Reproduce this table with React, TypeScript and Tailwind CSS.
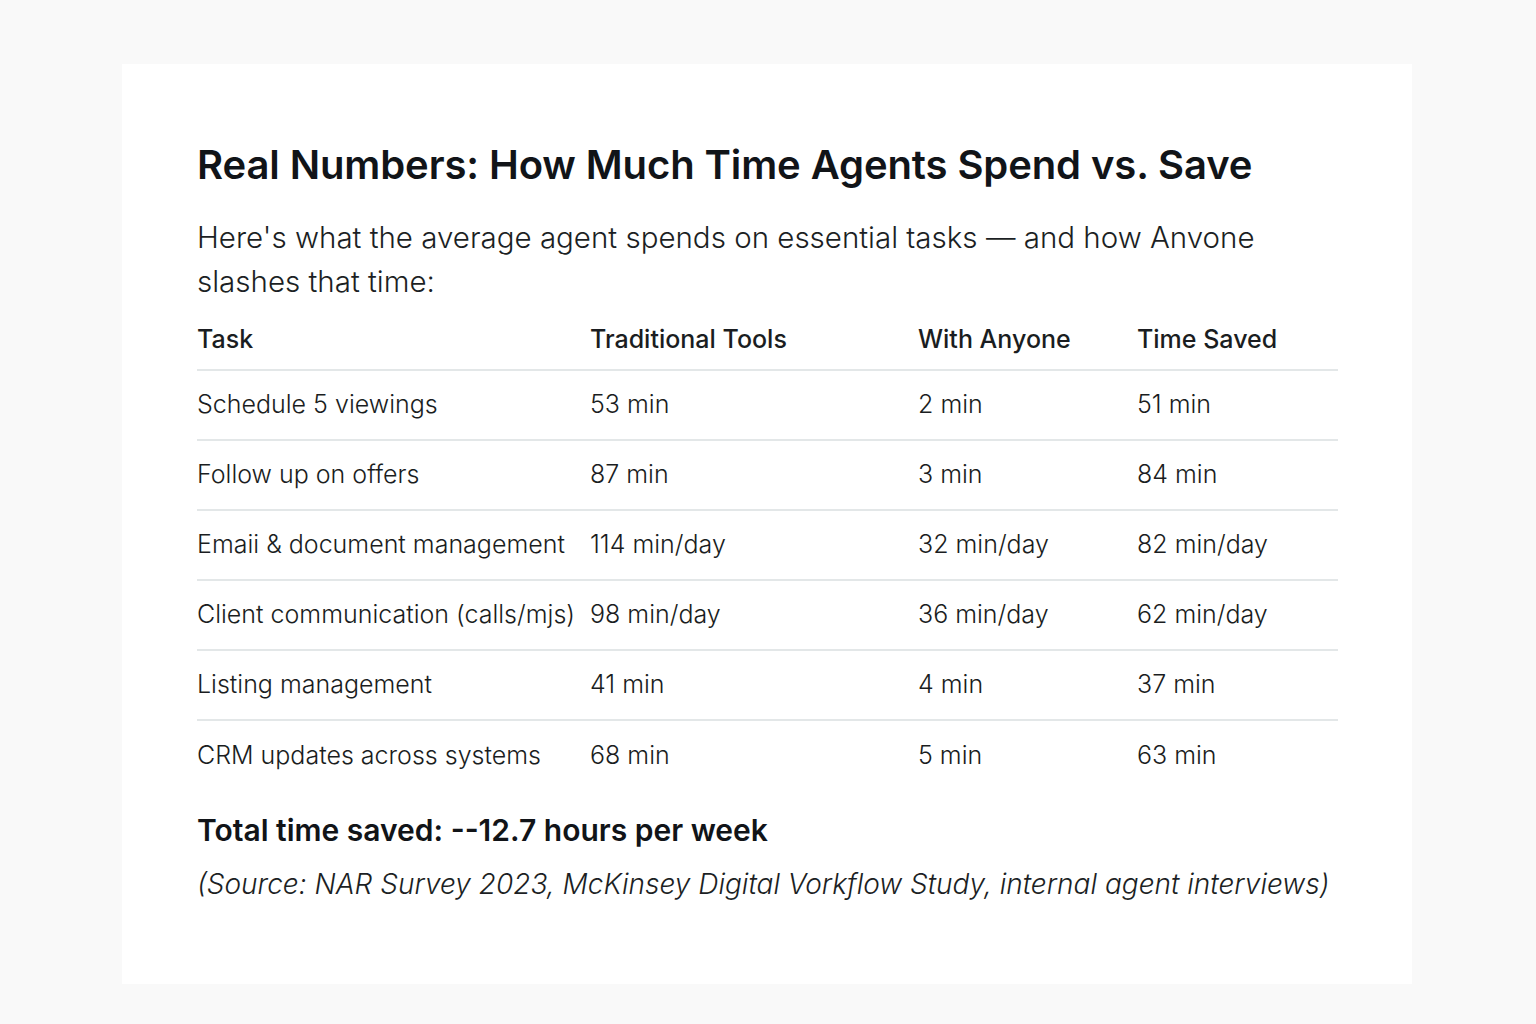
const rows = [
  ["Schedule 5 viewings", "53 min", "2 min", "51 min"],
  ["Follow up on offers", "87 min", "3 min", "84 min"],
  ["Emaii & document management", "114 min/day", "32 min/day", "82 min/day"],
  ["Client communication (calls/mjs)", "98 min/day", "36 min/day", "62 min/day"],
  ["Listing management", "41 min", "4 min", "37 min"],
  ["CRM updates across systems", "68 min", "5 min", "63 min"],
];

const App = () => {
  return (
    <div
      className="min-h-screen w-full bg-[#f9f9f9] pt-[64px] pl-[122px]"
      style={{ fontFamily: "Inter, 'Noto Sans', sans-serif" }}
    >
      <div className="w-[1290px] h-[920px] bg-white pl-[75px] pt-[76px]">
        {/* Title */}
        <h1 className="text-[40px] leading-[50px] font-semibold text-[#111418] tracking-[-0.1px]">
          Real Numbers: How Much Time Agents Spend vs. Save
        </h1>
        <p className="mt-[25px] text-[29.5px] leading-[44px] font-light text-[#1c1f24] w-[1100px]">
          Here's what the average agent spends on essential tasks — and how Anvone slashes that time:
        </p>

        {/* Table */}
        <table className="mt-[12px] w-[1141px] border-collapse text-[25px] text-[#1a1d21]">
          <thead>
            <tr className="border-b-2 border-[#e3e7e8]">
              <th className="w-[393px] text-left font-medium h-[55px] pb-[4px]">Task</th>
              <th className="w-[328px] text-left font-medium pb-[4px]">Traditional Tools</th>
              <th className="w-[219px] text-left font-medium pb-[4px]">With Anyone</th>
              <th className="text-left font-medium pb-[4px]">Time Saved</th>
            </tr>
          </thead>
          <tbody>
            {rows.map((r, i) => (
              <tr
                key={i}
                className={i < rows.length - 1 ? "border-b-2 border-[#e3e7e8]" : ""}
              >
                <td className="h-[70px] font-light">{r[0]}</td>
                <td className="font-light">{r[1]}</td>
                <td className="font-light">{r[2]}</td>
                <td className="font-light">{r[3]}</td>
              </tr>
            ))}
          </tbody>
        </table>

        {/* Footer */}
        <p className="mt-[20px] text-[30px] leading-[40px] font-semibold text-[#111418]">
          Total time saved: --12.7 hours per week
        </p>
        <p className="mt-[14px] text-[28px] leading-[40px] italic font-light text-[#1c1f24]">
          (Source: NAR Survey 2023, McKinsey Digital Vorkflow Study, internal agent interviews)
        </p>
      </div>
    </div>
  );
};

export default App;
